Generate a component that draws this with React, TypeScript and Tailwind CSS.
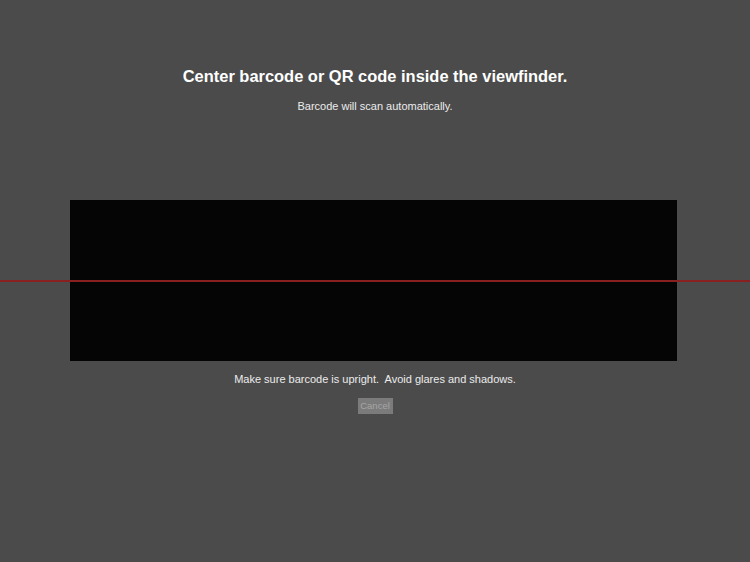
export default function App() {
  return (
    <div
      className="relative w-[750px] h-[562px] overflow-hidden bg-[#4b4b4b] flex flex-col items-center"
      style={{ fontFamily: '"Liberation Sans", Arial, sans-serif' }}
    >
      <h1 className="mt-[66px] text-[16.45px] leading-[20px] font-bold text-white">
        Center barcode or QR code inside the viewfinder.
      </h1>
      <p className="mt-[13px] text-[11px] leading-[14px] text-[#ececec]">
        Barcode will scan automatically.
      </p>
      <div className="mt-[87px] w-[607px] h-[161px] bg-[#050505] ml-[-3px]" />
      <p className="mt-[11px] text-[11px] leading-[14px] text-[#ececec]">
        Make sure barcode is upright.&nbsp; Avoid glares and shadows.
      </p>
      <button className="mt-[12px] w-[35px] h-[16px] bg-[#7b7b7b] text-[9.5px] leading-[16px] text-[#a6a6a6] flex items-center justify-center">
        Cancel
      </button>
      <div className="absolute left-0 right-0 top-[280px] h-[2px] bg-[#8a1f1f]" />
    </div>
  );
}
